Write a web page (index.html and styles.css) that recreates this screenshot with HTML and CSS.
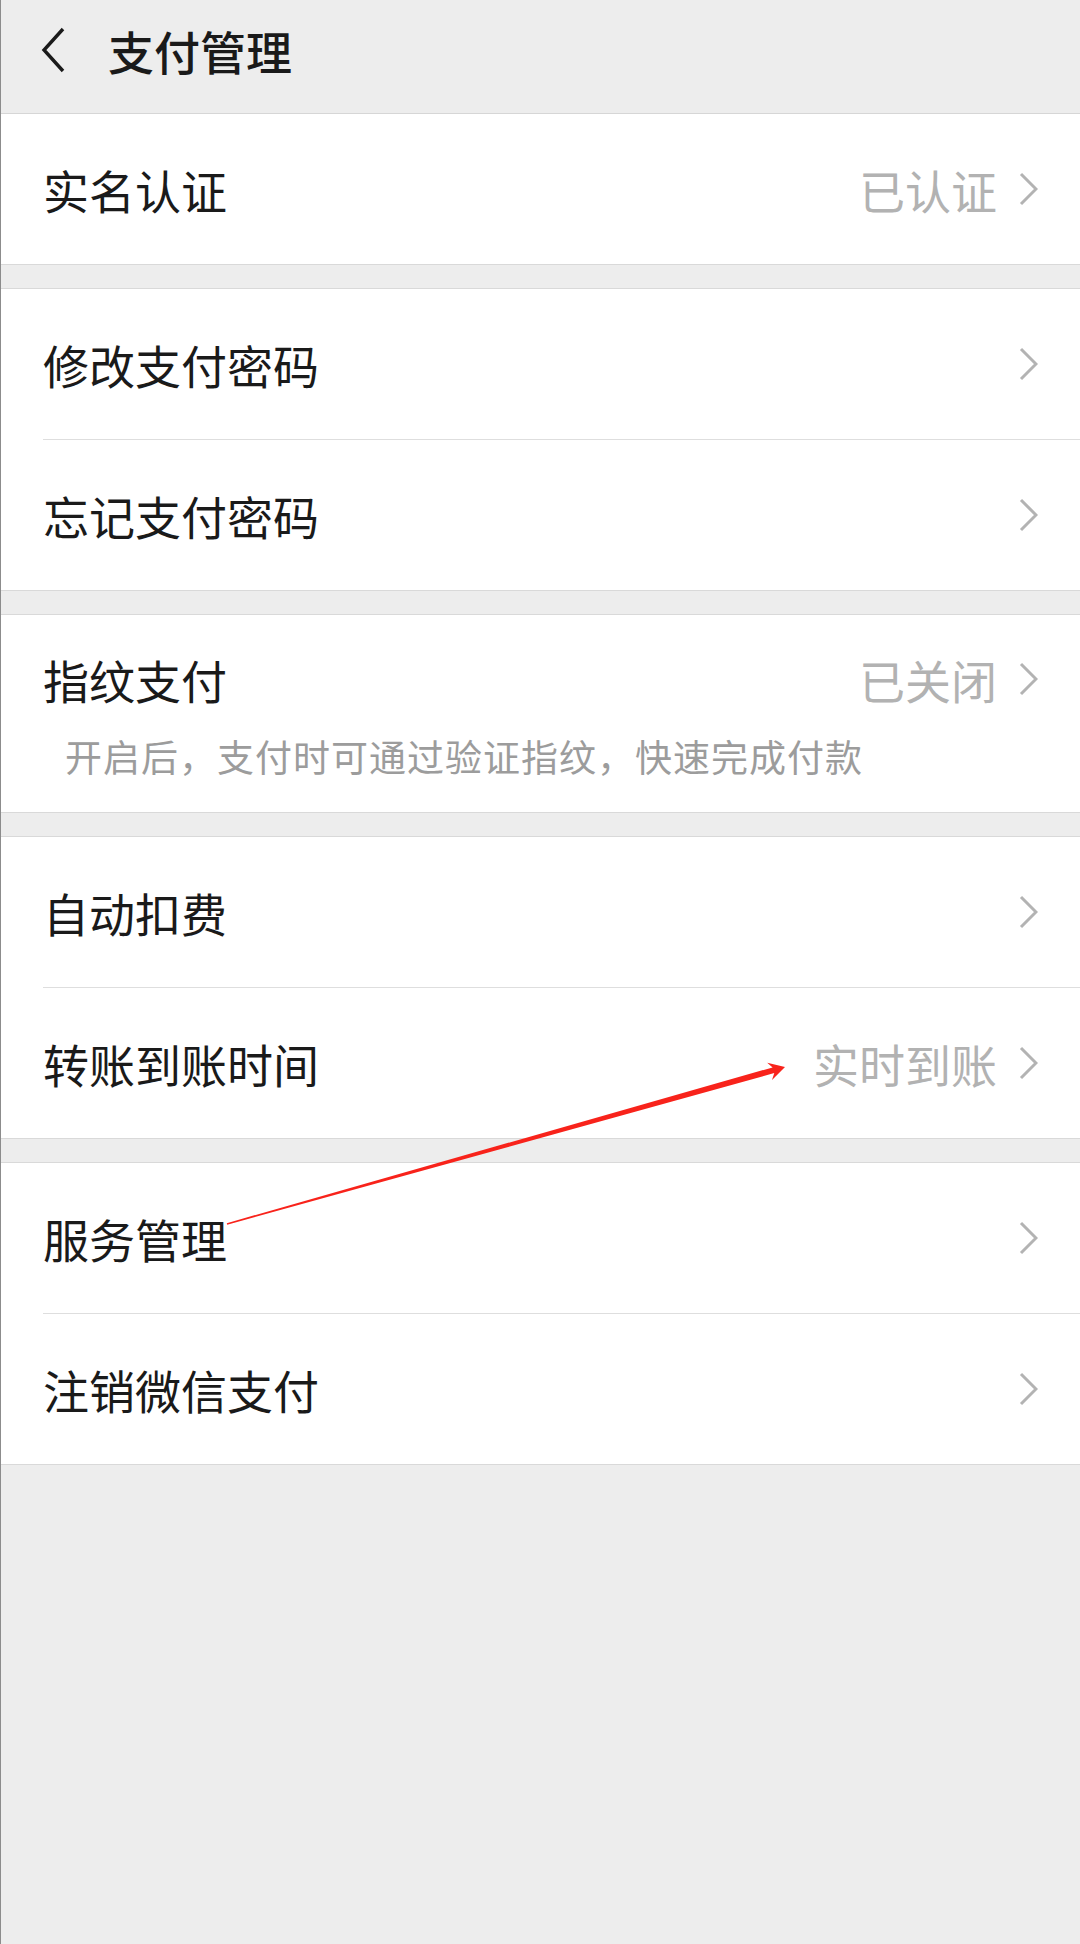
FILE: index.html
```html
<!DOCTYPE html>
<html lang="zh-CN">
<head>
    <meta charset="UTF-8">
    <meta name="viewport" content="width=device-width, initial-scale=1.0">
    <title>支付管理</title>
    <link rel="stylesheet" href="styles.css">
</head>
<body>

    <div class="page">
        <div class="top-bar">
            <svg class="back-icon" viewBox="0 0 24 46" width="24" height="46">
                <polyline points="22,2 3,23 22,44" fill="none" stroke="#1a1a1a" stroke-width="3.4"></polyline>
            </svg>
            <span class="top-title">支付管理</span>
        </div>

        <div class="group group-first">
            <div class="row">
                <span class="row-label">实名认证</span>
                <span class="row-value">已认证</span>
                <svg class="arrow" viewBox="0 0 19 34" width="19" height="34"><polyline points="2,2 17,17 2,32" fill="none" stroke="#b3b3b3" stroke-width="3"></polyline></svg>
            </div>
        </div>

        <div class="group">
            <div class="row">
                <span class="row-label">修改支付密码</span>
                <svg class="arrow" viewBox="0 0 19 34" width="19" height="34"><polyline points="2,2 17,17 2,32" fill="none" stroke="#b3b3b3" stroke-width="3"></polyline></svg>
            </div>
            <div class="row">
                <span class="row-label">忘记支付密码</span>
                <svg class="arrow" viewBox="0 0 19 34" width="19" height="34"><polyline points="2,2 17,17 2,32" fill="none" stroke="#b3b3b3" stroke-width="3"></polyline></svg>
            </div>
        </div>

        <div class="group">
            <div class="row row-tall">
                <div class="row-main">
                    <span class="row-label">指纹支付</span>
                    <span class="row-value">已关闭</span>
                    <svg class="arrow" viewBox="0 0 19 34" width="19" height="34"><polyline points="2,2 17,17 2,32" fill="none" stroke="#b3b3b3" stroke-width="3"></polyline></svg>
                </div>
                <div class="row-hint">开启后，支付时可通过验证指纹，快速完成付款</div>
            </div>
        </div>

        <div class="group">
            <div class="row">
                <span class="row-label">自动扣费</span>
                <svg class="arrow" viewBox="0 0 19 34" width="19" height="34"><polyline points="2,2 17,17 2,32" fill="none" stroke="#b3b3b3" stroke-width="3"></polyline></svg>
            </div>
            <div class="row">
                <span class="row-label">转账到账时间</span>
                <span class="row-value">实时到账</span>
                <svg class="arrow" viewBox="0 0 19 34" width="19" height="34"><polyline points="2,2 17,17 2,32" fill="none" stroke="#b3b3b3" stroke-width="3"></polyline></svg>
            </div>
        </div>

        <div class="group">
            <div class="row">
                <span class="row-label">服务管理</span>
                <svg class="arrow" viewBox="0 0 19 34" width="19" height="34"><polyline points="2,2 17,17 2,32" fill="none" stroke="#b3b3b3" stroke-width="3"></polyline></svg>
            </div>
            <div class="row">
                <span class="row-label">注销微信支付</span>
                <svg class="arrow" viewBox="0 0 19 34" width="19" height="34"><polyline points="2,2 17,17 2,32" fill="none" stroke="#b3b3b3" stroke-width="3"></polyline></svg>
            </div>
        </div>

        <!-- red annotation arrow drawn over the list -->
        <svg class="annotation" viewBox="0 0 1080 1944" width="1080" height="1944">
            <polygon fill="#f8231b" points="785,1067 772,1080 774.3,1073.1 227.2,1224.8 226.8,1223.2 772.6,1067.4 767.2,1062.7"></polygon>
        </svg>
    </div>

</body>
</html>
```

FILE: styles.css
```css
body {
    margin: 0;
    font-family: "Noto Sans CJK SC", "Noto Sans", sans-serif;
    background-color: #ededed;
    color: #1a1a1a;
}

.page {
    position: relative;
    width: 1080px;
    min-height: 1944px;
    box-sizing: border-box;
    border-left: 1px solid #8c8c8c;
    background-color: #ededed;
}

/* Top bar */
.top-bar {
    height: 114px;
    box-sizing: border-box;
    padding: 0 0 14px 40px;
    display: flex;
    align-items: center;
    border-bottom: 1px solid #d6d6d6;
}

.back-icon {
    display: block;
}

.top-title {
    margin-left: 43px;
    font-size: 46px;
    font-weight: 500;
    line-height: 1;
}

/* List groups */
.group {
    background-color: #fff;
    border-top: 1px solid #d9d9d9;
    border-bottom: 1px solid #d9d9d9;
    margin-bottom: 23px;
}

.group-first {
    border-top: none;
}

.row {
    height: 150px;
    margin-left: 42px;
    padding-right: 42px;
    display: flex;
    align-items: center;
    font-size: 46px;
}

.row + .row {
    border-top: 1px solid #dedede;
}

.row-label {
    flex: 1;
}

.row-value {
    color: #b2b2b2;
    margin-right: 22px;
}

.arrow {
    display: block;
}

/* Row with a hint line underneath */
.row-tall {
    height: 197px;
    flex-direction: column;
    align-items: stretch;
}

.row-main {
    height: 127px;
    display: flex;
    align-items: center;
}

.row-hint {
    padding-left: 22px;
    font-size: 37px;
    letter-spacing: 1px;
    line-height: 28px;
    color: #9c9c9c;
}

/* Annotation overlay */
.annotation {
    position: absolute;
    top: 0;
    left: -1px;
    pointer-events: none;
}
```
